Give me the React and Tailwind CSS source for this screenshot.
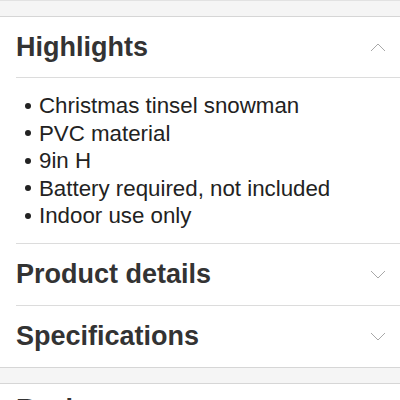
const highlights = [
  'Christmas tinsel snowman',
  'PVC material',
  '9in H',
  'Battery required, not included',
  'Indoor use only',
]

function Chevron({ up }) {
  return (
    <svg width="16" height="9" viewBox="0 0 16 9" className="mr-[14px]">
      <polyline
        points={up ? '1,8 8,1 15,8' : '1,1 8,8 15,1'}
        fill="none"
        stroke="#a8a8a8"
        strokeWidth="1"
      />
    </svg>
  )
}

function SectionHeader({ title, up, tall }) {
  return (
    <div className={tall ? 'flex items-center justify-between h-[61px]' : 'flex items-center justify-between h-[60px]'}>
      <h2 className="text-[27px] font-bold text-[#333] leading-8">{title}</h2>
      <Chevron up={up} />
    </div>
  )
}

export default function App() {
  return (
    <div className="w-[400px] h-[400px] overflow-hidden bg-white" style={{ fontFamily: '"Liberation Sans", Arial, sans-serif' }}>
      <div className="h-[17px] bg-[#f5f5f5] border-t border-b border-t-[#e2e2e2] border-b-[#d6d6d6]" />

      <div className="pl-4">
        <SectionHeader title="Highlights" up />
        <div className="border-t border-[#dcdcdc] pt-[14px] pb-[13px]">
          <ul>
            {highlights.map((h) => (
              <li key={h} className="flex items-center text-[22.3px] leading-[27.5px] text-[#222]">
                <span className="w-[6px] h-[6px] rounded-full bg-[#222] ml-[9px] mr-[8px]" />
                {h}
              </li>
            ))}
          </ul>
        </div>
        <div className="border-t border-[#dcdcdc]">
          <SectionHeader title="Product details" tall />
        </div>
        <div className="border-t border-[#dcdcdc]">
          <SectionHeader title="Specifications" tall />
        </div>
      </div>

      <div className="h-[17px] bg-[#f5f5f5] border-t border-b border-t-[#d6d6d6] border-b-[#d6d6d6]" />

      <div className="pl-4 pt-[9px]">
        <h2 className="text-[27px] font-bold text-[#333] leading-8">Reviews</h2>
      </div>
    </div>
  )
}
